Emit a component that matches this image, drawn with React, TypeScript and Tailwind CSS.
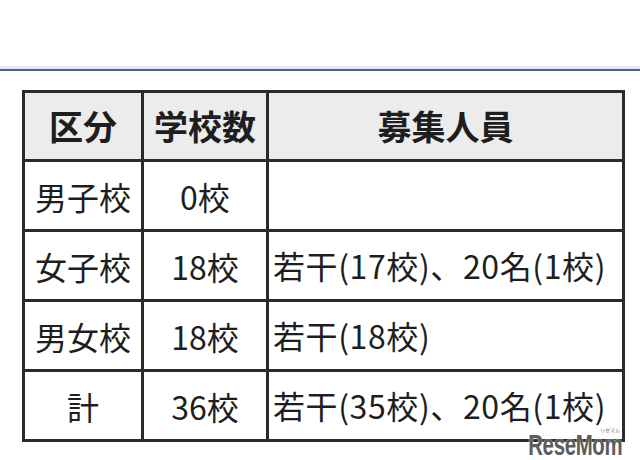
import React from 'react';

const rows = [
  { kind: '男子校', count: '0校', people: '' },
  { kind: '女子校', count: '18校', people: '若干(17校)、20名(1校)' },
  { kind: '男女校', count: '18校', people: '若干(18校)' },
  { kind: '計', count: '36校', people: '若干(35校)、20名(1校)' },
];

export default function App() {
  return (
    <div
      className="relative w-[640px] h-[460px] overflow-hidden bg-white text-[#1e1e1e]"
      style={{ fontFamily: '"Noto Sans CJK JP", "Noto Sans", sans-serif' }}
    >
      {/* top rule */}
      <div className="h-[66px] bg-white" />
      <div className="h-[3px] bg-[#e6ebf5]" />
      <div className="h-[2px] bg-[#4d5c98]" />

      <div className="pl-[22px] pt-[19px]">
        <table className="w-[603px] border-collapse border-[3px] border-[#2a2a2a] table-fixed leading-none">
          <colgroup>
            <col className="w-[119px]" />
            <col className="w-[125px]" />
            <col />
          </colgroup>
          <thead>
            <tr className="h-[69px] bg-[#ececec]">
              <th className="border-[3px] border-[#2a2a2a] text-[34px] font-bold text-center whitespace-nowrap">区分</th>
              <th className="border-[3px] border-[#2a2a2a] text-[34px] font-bold text-center whitespace-nowrap">学校数</th>
              <th className="border-[3px] border-[#2a2a2a] text-[34px] font-bold text-center whitespace-nowrap">募集人員</th>
            </tr>
          </thead>
          <tbody>
            {rows.map((r) => (
              <tr key={r.kind} className="h-[70px]">
                <td className="border-[3px] border-[#2a2a2a] text-[32px] text-center whitespace-nowrap">{r.kind}</td>
                <td className="border-[3px] border-[#2a2a2a] text-[32px] text-center whitespace-nowrap">{r.count}</td>
                <td className="border-[3px] border-[#2a2a2a] text-[32px] tracking-[0.6px] pl-[4px] pb-[2px] whitespace-nowrap overflow-hidden">
                  {r.people}
                </td>
              </tr>
            ))}
          </tbody>
        </table>
      </div>

      {/* watermark logo */}
      <div className="absolute right-[18px] bottom-[3px] h-[24px] leading-[24px]">
        <span
          className="block origin-right scale-x-[0.68] text-[30px] leading-[24px] font-black tracking-[-0.5px] text-[#5c5c5c] whitespace-nowrap"
          style={{ fontFamily: '"Liberation Sans", Arial, sans-serif', textShadow: '0 0 2px #fff' }}
        >
          ReseMom
        </span>
        <span className="absolute right-[2px] top-[-6px] text-[5px] leading-[5px] text-[#666]">リセマム</span>
      </div>
    </div>
  );
}
